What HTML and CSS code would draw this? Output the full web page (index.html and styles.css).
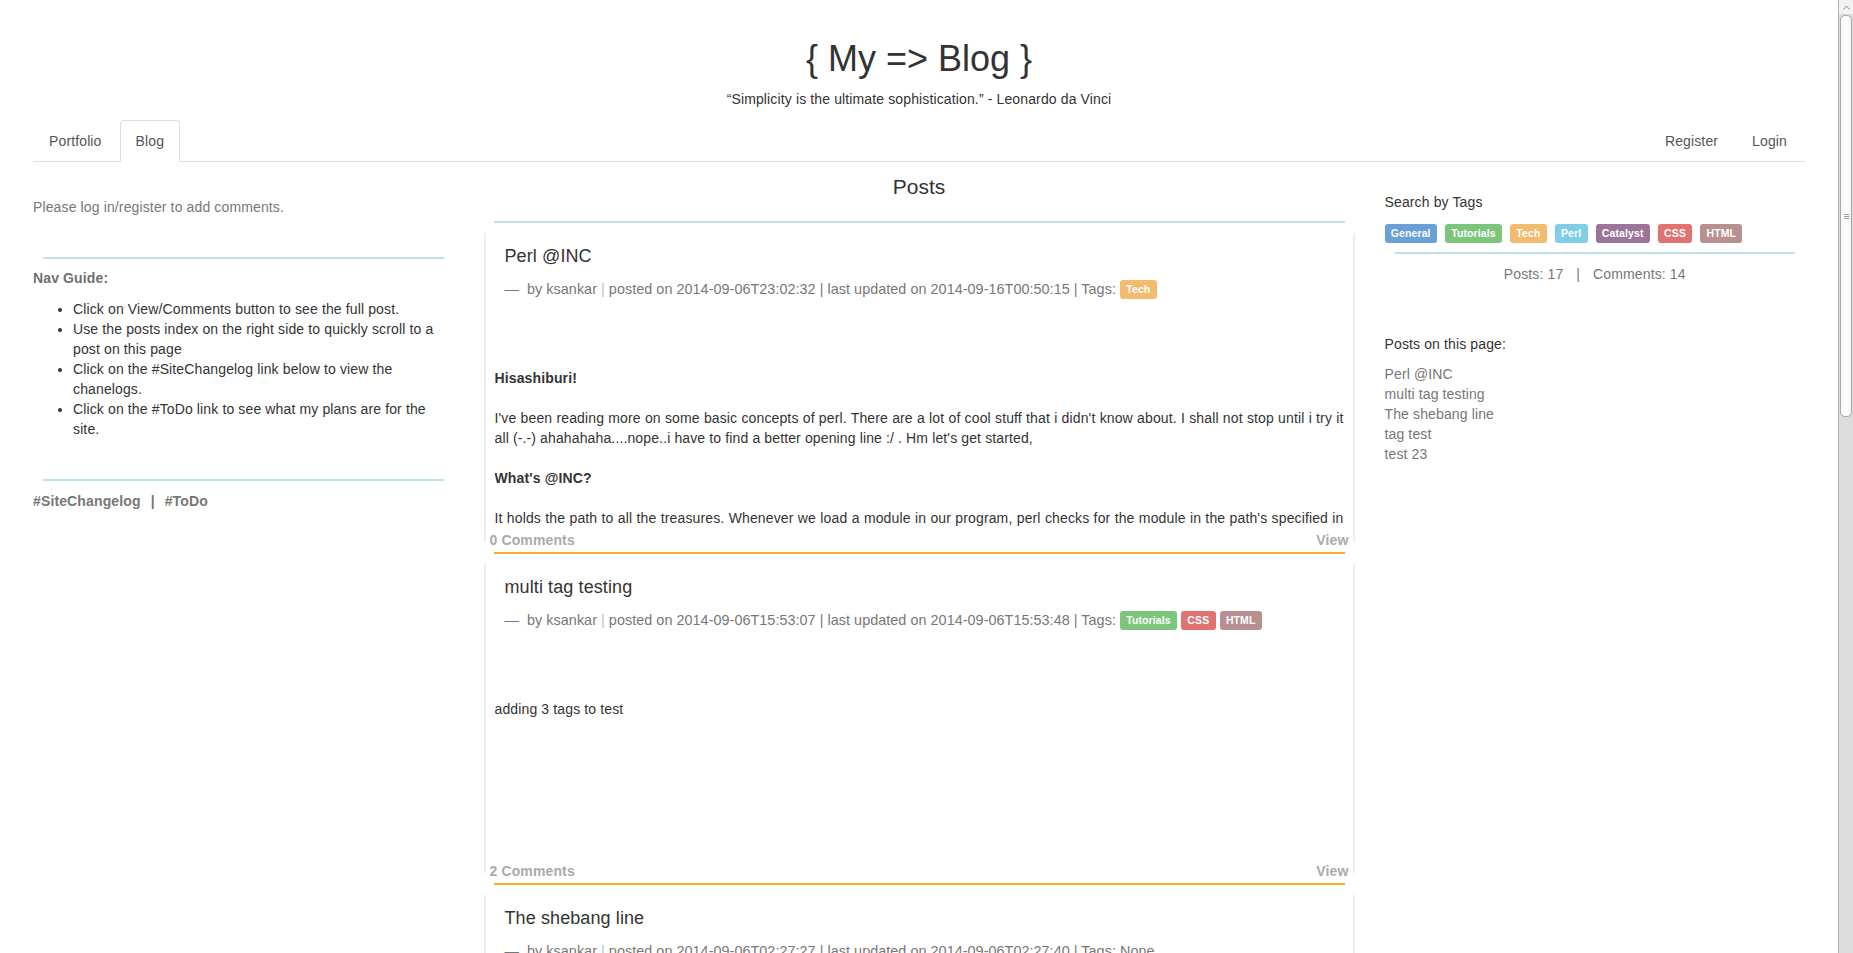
FILE: index.html
```html
<!DOCTYPE html>
<html lang="en">
<head>
<meta charset="utf-8">
<title>{ My =&gt; Blog }</title>
<link rel="stylesheet" href="styles.css">
</head>
<body>
<div class="page">
<header class="site-header">
  <h1 class="site-title">{ My =&gt; Blog }</h1>
  <p class="site-quote">“Simplicity is the ultimate sophistication.” - Leonardo da Vinci</p>
  <ul class="nav-tabs">
    <li><a href="#">Portfolio</a></li>
    <li class="active"><a href="#">Blog</a></li>
    <li class="push"><a href="#">Register</a></li>
    <li><a href="#">Login</a></li>
  </ul>
</header>

<main class="main-row">
  <aside class="col col-left">
    <p class="login-note">Please log in/register to add comments.</p>
    <hr class="rule rule-blue rule-left1">
    <p class="nav-guide-title">Nav Guide:</p>
    <ul class="nav-guide">
      <li>Click on View/Comments button to see the full post.</li>
      <li>Use the posts index on the right side to quickly scroll to a post on this page</li>
      <li>Click on the #SiteChangelog link below to view the chanelogs.</li>
      <li>Click on the #ToDo link to see what my plans are for the site.</li>
    </ul>
    <hr class="rule rule-blue rule-left2">
    <p class="side-links"><a href="#">#SiteChangelog</a><span class="sep">|</span><a href="#">#ToDo</a></p>
  </aside>

  <section class="col col-mid">
    <h2 class="posts-heading">Posts</h2>
    <hr class="rule rule-blue rule-posts">

    <article class="post">
      <div class="post-card">
        <div class="post-head">
          <h4 class="post-title">Perl @INC</h4>
          <div class="post-meta">—&nbsp; by ksankar <span class="pipe-light">|</span> posted on 2014-09-06T23:02:32 | last updated on 2014-09-16T00:50:15 | Tags: <span class="label label-tech">Tech</span></div>
        </div>
        <div class="post-body">
          <p><strong>Hisashiburi!</strong></p>
          <p>I've been reading more on some basic concepts of perl. There are a lot of cool stuff that i didn't know about. I shall not stop until i try it all (-.-) ahahahaha....nope..i have to find a better opening line :/ . Hm let's get started,</p>
          <p><strong>What's @INC?</strong></p>
          <p>It holds the path to all the treasures. Whenever we load a module in our program, perl checks for the module in the path's specified in @INC array. If the module is not found in any of those paths, perl will die with a message saying it can't locate the module in @INC.</p>
        </div>
      </div>
      <div class="post-foot"><a href="#">0 Comments</a><a href="#">View</a></div>
      <hr class="rule rule-orange">
    </article>

    <article class="post">
      <div class="post-card">
        <div class="post-head">
          <h4 class="post-title">multi tag testing</h4>
          <div class="post-meta">—&nbsp; by ksankar <span class="pipe-light">|</span> posted on 2014-09-06T15:53:07 | last updated on 2014-09-06T15:53:48 | Tags: <span class="label label-tutorials">Tutorials</span> <span class="label label-css">CSS</span> <span class="label label-html">HTML</span></div>
        </div>
        <div class="post-body">
          <p>adding 3 tags to test</p>
        </div>
      </div>
      <div class="post-foot"><a href="#">2 Comments</a><a href="#">View</a></div>
      <hr class="rule rule-orange">
    </article>

    <article class="post">
      <div class="post-card">
        <div class="post-head">
          <h4 class="post-title">The shebang line</h4>
          <div class="post-meta">—&nbsp; by ksankar <span class="pipe-light">|</span> posted on 2014-09-06T02:27:27 | last updated on 2014-09-06T02:27:40 | Tags: None</div>
        </div>
        <div class="post-body">
          <p>The first line of a perl script usually starts with #! followed by the path to the perl interpreter. This is called the shebang line.</p>
        </div>
      </div>
      <div class="post-foot"><a href="#">1 Comments</a><a href="#">View</a></div>
      <hr class="rule rule-orange">
    </article>

    <article class="post">
      <div class="post-card">
        <div class="post-head">
          <h4 class="post-title">tag test</h4>
          <div class="post-meta">—&nbsp; by ksankar <span class="pipe-light">|</span> posted on 2014-09-05T21:10:02 | last updated on 2014-09-05T21:10:02 | Tags: <span class="label label-general">General</span></div>
        </div>
        <div class="post-body">
          <p>testing tags</p>
        </div>
      </div>
      <div class="post-foot"><a href="#">0 Comments</a><a href="#">View</a></div>
      <hr class="rule rule-orange">
    </article>

    <article class="post">
      <div class="post-card">
        <div class="post-head">
          <h4 class="post-title">test 23</h4>
          <div class="post-meta">—&nbsp; by ksankar <span class="pipe-light">|</span> posted on 2014-09-05T20:44:51 | last updated on 2014-09-05T20:44:51 | Tags: None</div>
        </div>
        <div class="post-body">
          <p>test</p>
        </div>
      </div>
      <div class="post-foot"><a href="#">0 Comments</a><a href="#">View</a></div>
      <hr class="rule rule-orange">
    </article>

    <ul class="pager">
      <li><a href="#">Older &rarr;</a></li>
    </ul>
  </section>

  <aside class="col col-right">
    <p class="search-title">Search by Tags</p>
    <div class="tag-list">
      <a href="#" class="label label-general">General</a>
      <a href="#" class="label label-tutorials">Tutorials</a>
      <a href="#" class="label label-tech">Tech</a>
      <a href="#" class="label label-perl">Perl</a>
      <a href="#" class="label label-catalyst">Catalyst</a>
      <a href="#" class="label label-css">CSS</a>
      <a href="#" class="label label-html">HTML</a>
    </div>
    <hr class="rule rule-blue rule-right">
    <p class="stats">Posts: 17<span class="sep">|</span>Comments: 14</p>
    <p class="index-title">Posts on this page:</p>
    <ul class="post-index">
      <li><a href="#">Perl @INC</a></li>
      <li><a href="#">multi tag testing</a></li>
      <li><a href="#">The shebang line</a></li>
      <li><a href="#">tag test</a></li>
      <li><a href="#">test 23</a></li>
    </ul>
  </aside>
</main>

<footer class="site-footer">
  <p>&copy; 2014 ksankar</p>
</footer>
</div>

<div class="scrollbar" aria-hidden="true">
  <div class="scroll-arrow">
    <svg width="7" height="5" viewBox="0 0 7 5"><path d="M0.5 4.5 L3.5 1 L6.5 4.5" fill="none" stroke="#8a8a8a" stroke-width="1"/></svg>
  </div>
  <div class="scroll-thumb">
    <span class="grip"></span>
  </div>
</div>
</body>
</html>
```

FILE: styles.css
```css
html {
  background: #fff;
}

body {
  margin: 0;
  display: flex;
  align-items: flex-start;
  font-family: "Liberation Sans", Arial, sans-serif;
  font-size: 14px;
  line-height: 20px;
  letter-spacing: 0.13px;
  color: #333;
  background: #fff;
}

a {
  text-decoration: none;
}

p {
  margin: 0;
}

.page {
  flex: 1;
  min-width: 0;
}

/* Fake window scrollbar */
.scrollbar {
  flex: none;
  width: 14px;
  height: 100vh;
  background: #dcdcdc;
  border-left: 1px solid #b4b4b4;
  display: flex;
  flex-direction: column;
  align-items: center;
}

.scroll-arrow {
  height: 14px;
  width: 14px;
  display: flex;
  align-items: center;
  justify-content: center;
  background: #f2f2f2;
}

.scroll-thumb {
  width: 12px;
  height: 402px;
  margin-top: 1px;
  background: linear-gradient(to right, #f7f7f7, #ffffff 50%, #f3f3f3);
  border: 1px solid #a8a8a8;
  border-radius: 5px;
  box-sizing: border-box;
  display: flex;
  align-items: center;
  justify-content: center;
}

.grip {
  width: 5px;
  height: 5px;
  border-top: 1px solid #9a9a9a;
  border-bottom: 1px solid #9a9a9a;
  box-sizing: border-box;
  background: linear-gradient(#9a9a9a, #9a9a9a) center / 5px 1px no-repeat;
}

/* Header */
.site-header {
  padding: 0 18px;
}

.site-title {
  margin: 39px 0 0;
  font-size: 36px;
  line-height: 40px;
  font-weight: 500;
  letter-spacing: 0;
  color: #333;
  text-align: center;
}

.site-quote {
  margin-top: 10px;
  text-align: center;
  color: #333;
}

.nav-tabs {
  display: flex;
  list-style: none;
  margin: 11px 15px 0;
  padding: 0;
  border-bottom: 1px solid #ddd;
}

.nav-tabs li {
  margin-bottom: -1px;
}

.nav-tabs li.push {
  margin-left: auto;
}

.nav-tabs a {
  display: block;
  padding: 10px 15px;
  margin-right: 2px;
  line-height: 20px;
  border: 1px solid transparent;
  border-radius: 4px 4px 0 0;
  color: #555;
}

.nav-tabs li.active a {
  background: #fff;
  border-color: #ddd #ddd transparent;
}

/* Main grid */
.main-row {
  display: grid;
  grid-template-columns: 1fr 2fr 1fr;
  padding: 0 18px;
}

.col {
  padding: 0 15px;
  min-width: 0;
}

.rule {
  border: 0;
  height: 0;
  margin: 0 10px;
}

.rule-blue {
  border-top: 2px solid #bde0ea;
}

.rule-orange {
  border-top: 2px solid #f9ad2e;
  margin: 2px 10px 10px;
}

/* Left column */
.login-note {
  margin-top: 35px;
  color: #777;
}

.rule-left1 {
  margin-top: 40px;
}

.nav-guide-title {
  margin-top: 9px;
  font-weight: bold;
  color: #6f6f6f;
}

.nav-guide {
  margin: 11px 0 0;
  padding-left: 40px;
  color: #333;
}

.rule-left2 {
  margin-top: 40px;
}

.side-links {
  margin-top: 10px;
  font-weight: bold;
}

.side-links a {
  color: #777;
}

.side-links .sep {
  margin: 0 10px;
  color: #777;
}

/* Middle column */
.posts-heading {
  margin: 14px 0 0;
  font-size: 21px;
  line-height: 22px;
  font-weight: 500;
  letter-spacing: 0;
  text-align: center;
  color: #333;
}

.rule-posts {
  margin-top: 23px;
}

.post:first-of-type {
  margin-top: 10px;
}

.post-card {
  border-left: 2px solid #eee;
  border-right: 2px solid #eee;
  padding: 13px 9px 12px;
}

.post-head {
  padding: 0 10px;
}

.post-title {
  margin: 0;
  font-size: 18px;
  line-height: 20px;
  font-weight: 500;
  letter-spacing: 0.1px;
  color: #333;
}

.post-meta {
  margin-top: 13px;
  font-size: 14.4px;
  line-height: 20px;
  letter-spacing: 0.04px;
  color: #777;
}

.pipe-light {
  color: #a9c6d6;
}

.post-body {
  margin-top: 69px;
  height: 162px;
  overflow: hidden;
  text-align: justify;
  color: #333;
}

.post-body p {
  margin: 0 0 20px;
}

.post-foot {
  display: flex;
  justify-content: space-between;
  margin-top: -12px;
  padding: 0 6px;
  font-weight: bold;
}

.post-foot a {
  color: #aaa;
}

.pager {
  list-style: none;
  margin: 20px 0;
  padding: 0;
  text-align: right;
}

.pager a {
  display: inline-block;
  padding: 5px 14px;
  border: 1px solid #ddd;
  border-radius: 15px;
  color: #777;
}

/* Labels */
.label {
  display: inline-block;
  padding: 2px 6.3px 3px;
  font-size: 10.5px;
  line-height: 14px;
  font-weight: bold;
  letter-spacing: 0.1px;
  color: #fff;
  border-radius: 3px;
  vertical-align: middle;
  text-align: center;
  white-space: nowrap;
}

.post-meta .label {
  vertical-align: 1px;
}

.label-general { background: #69a0d6; }
.label-tutorials { background: #7cc67c; }
.label-tech { background: #f2bb6d; }
.label-perl { background: #7fcde6; }
.label-catalyst { background: #9a7499; }
.label-css { background: #e07371; }
.label-html { background: #b99090; }

/* Right column */
.search-title {
  margin-top: 30px;
  color: #333;
}

.tag-list {
  display: flex;
  flex-wrap: wrap;
  gap: 8px;
  margin-top: 12px;
}

.rule-right {
  margin-top: 9px;
}

.stats {
  margin-top: 10px;
  text-align: center;
  color: #777;
}

.stats .sep {
  margin: 0 13px;
}

.index-title {
  margin-top: 50px;
  color: #333;
}

.post-index {
  list-style: none;
  margin: 10px 0 0;
  padding: 0;
}

.post-index a {
  color: #777;
}

/* Footer */
.site-footer {
  padding: 100px 33px 98px;
  text-align: center;
  color: #999;
}
```
